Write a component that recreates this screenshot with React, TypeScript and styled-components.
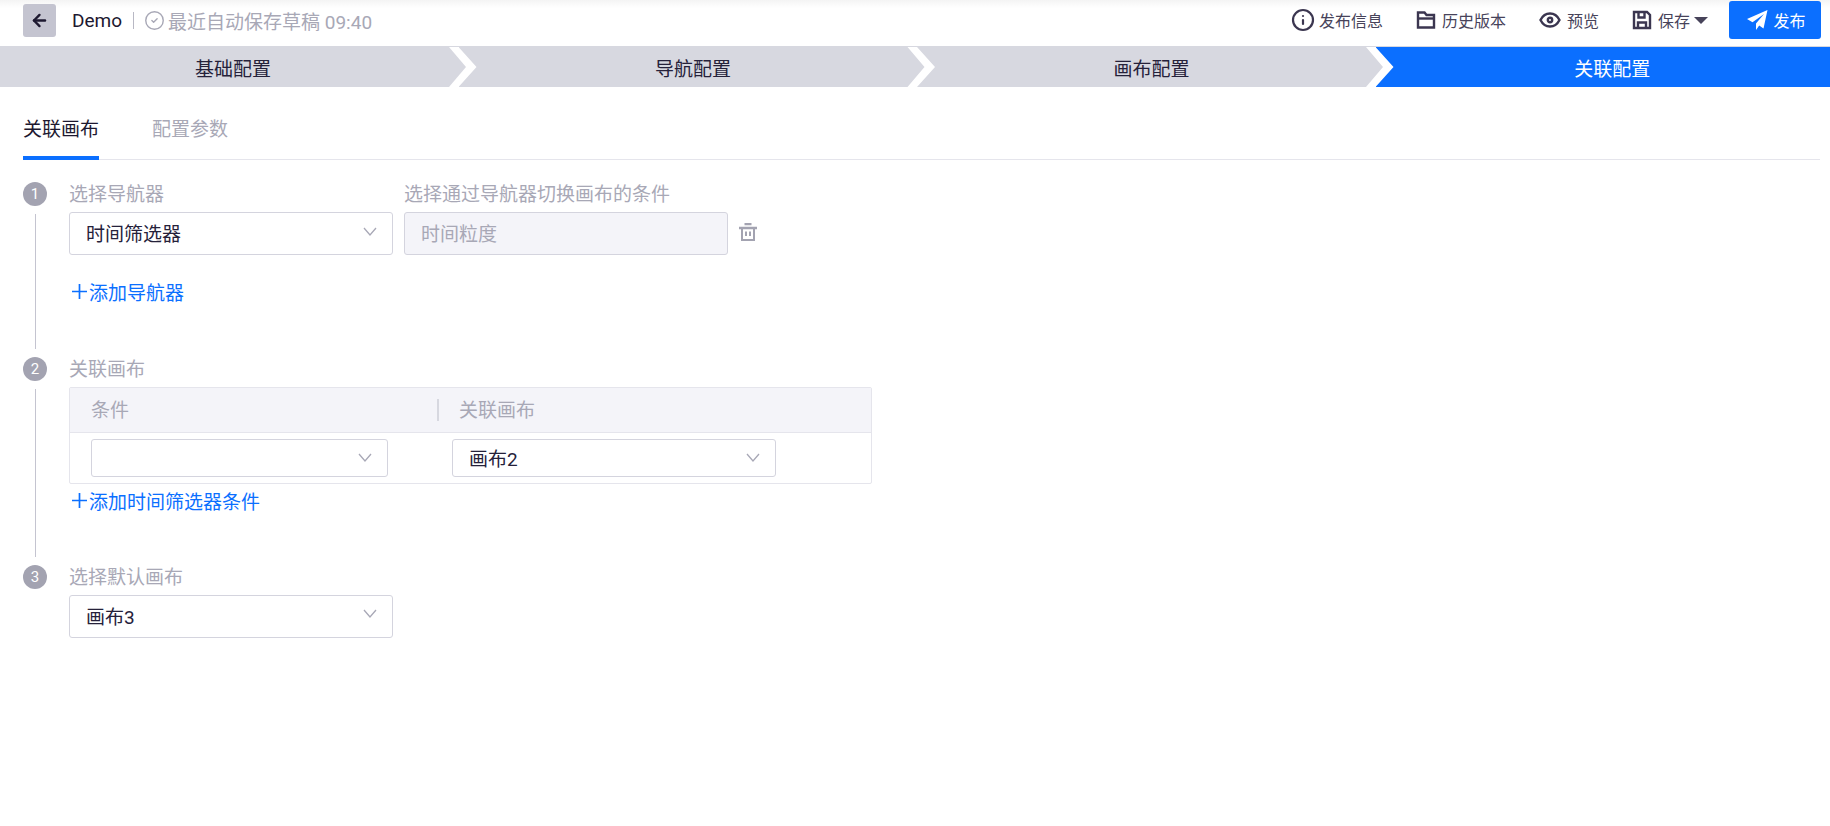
import React from 'react'
import styled, { createGlobalStyle } from 'styled-components'
import { ArrowLeft, CircleCheck, Info } from 'lucide-react'

const GlobalStyle = createGlobalStyle`
	html, body {
		margin: 0;
		padding: 0;
		background: #fff;
	}
	body {
		font-family: Roboto, 'Noto Sans CJK SC', sans-serif;
		color: #25213a;
	}
`

const Page = styled.div`
	width: 1830px;
	height: 826px;
	overflow: hidden;
	background: #fff;
`

const Header = styled.header`
	height: 46px;
	box-sizing: border-box;
	padding: 0 9px 6px 23px;
	display: flex;
	align-items: center;
	justify-content: space-between;
	background: linear-gradient(#f4f4f4, #fff 8px);
`

const HeaderLeft = styled.div`
	display: flex;
	align-items: center;
`

const BackButton = styled.button`
	width: 33px;
	height: 33px;
	padding: 0;
	border: 0;
	border-radius: 3px;
	background: #c4c4d0;
	color: #1d1830;
	display: flex;
	align-items: center;
	justify-content: center;
`

const Title = styled.span`
	margin-left: 16px;
	font-size: 19px;
	color: #1d1830;
`

const Divider = styled.span`
	width: 1px;
	height: 17px;
	margin: 0 10px 0 11px;
	background: #b8b8c4;
`

const DraftStatus = styled.span`
	display: flex;
	align-items: center;
	gap: 3px;
	font-size: 19px;
	color: #a8a8b6;
`

const HeaderActions = styled.div`
	display: flex;
	align-items: center;
`

const ActionItem = styled.span<{ $gap: number }>`
	display: flex;
	align-items: center;
	gap: 6px;
	margin-right: ${(p) => p.$gap}px;
	font-size: 16px;
	color: #47435a;
	white-space: nowrap;
`

const InfoIcon = styled(Info)`
	margin: 0 -2px;
	color: #3b3650;
`

const Caret = styled.span`
	width: 0;
	height: 0;
	border-left: 7px solid transparent;
	border-right: 7px solid transparent;
	border-top: 7px solid #47435a;
	margin-left: -2px;
`

const PublishButton = styled.button`
	width: 92px;
	height: 38px;
	padding: 0 0 0 2px;
	border: 0;
	border-radius: 3px;
	background: #0b6fff;
	color: #fff;
	font: inherit;
	font-size: 16px;
	display: flex;
	align-items: center;
	justify-content: center;
	gap: 5px;
`

const StepBar = styled.nav`
	display: flex;
	height: 41px;
	box-sizing: border-box;
	border-top: 1px solid #d7d8e0;
`

const StepItem = styled.div<{ $active?: boolean; $first?: boolean }>`
	flex: ${(p) => (p.$active ? '1 1 0' : '0 0 466px')};
	margin-left: ${(p) => (p.$first ? '0' : '-7.5px')};
	padding-left: ${(p) => (p.$first ? '0' : p.$active ? '19px' : '3px')};
	box-sizing: border-box;
	display: flex;
	align-items: center;
	justify-content: center;
	font-size: 19px;
	color: ${(p) => (p.$active ? '#fff' : '#25213a')};
	background: ${(p) => (p.$active ? '#0b6fff' : '#d7d8e0')};
	clip-path: ${(p) =>
		p.$active
			? 'polygon(0 0, 100% 0, 100% 100%, 0 100%, 18px 50%)'
			: p.$first
				? 'polygon(0 0, 449px 0, 466px 50%, 449px 100%, 0 100%)'
				: 'polygon(0 0, 449px 0, 466px 50%, 449px 100%, 0 100%, 18px 50%)'};
`

const TabBar = styled.div`
	display: flex;
	gap: 53px;
	margin: 0 10px 0 23px;
	height: 73px;
	box-sizing: border-box;
	border-bottom: 1px solid #e5e5ec;
`

const Tab = styled.div<{ $active?: boolean }>`
	height: 73px;
	box-sizing: border-box;
	padding-top: 30px;
	line-height: 25px;
	font-size: 19px;
	color: ${(p) => (p.$active ? '#1d1830' : '#a8a8b6')};
	border-bottom: 4px solid ${(p) => (p.$active ? '#0b6fff' : 'transparent')};
`

const Steps = styled.div`
	padding: 22px 0 0 23px;
`

const StepRow = styled.section<{ $height?: number }>`
	display: flex;
	gap: 22px;
	height: ${(p) => (p.$height ? `${p.$height}px` : 'auto')};
`

const Rail = styled.div`
	width: 24px;
	display: flex;
	flex-direction: column;
	align-items: center;
`

const StepNumber = styled.span`
	width: 24px;
	height: 24px;
	flex: none;
	border-radius: 50%;
	background: #a3a3b1;
	color: #fff;
	font-size: 15px;
	line-height: 24px;
	text-align: center;
`

const RailLine = styled.span`
	width: 1px;
	flex: 1;
	margin: 8px 0;
	background: #c4c4d0;
`

const FieldRow = styled.div`
	display: flex;
	align-items: flex-end;
	gap: 11px;
`

const Field = styled.div`
	display: flex;
	flex-direction: column;
	gap: 5px;
`

const Label = styled.label`
	font-size: 19px;
	line-height: 25px;
	color: #a8a8b6;
`

const Select = styled.div<{ $width?: number; $height?: number }>`
	width: ${(p) => p.$width ?? 324}px;
	height: ${(p) => p.$height ?? 43}px;
	box-sizing: border-box;
	padding: 0 15px 2px 16px;
	border: 1px solid #d4d4de;
	border-radius: 3px;
	display: flex;
	align-items: center;
	justify-content: space-between;
	font-size: 19px;
	color: #25213a;
	background: #fff;
`

const DisabledInput = styled(Select)`
	background: #f4f4f9;
	color: #a8a8b6;
`

const ArrowSvg = styled.svg<{ $lift?: number }>`
	margin-top: ${(p) => -(p.$lift ?? 0)}px;
	color: #a8a8b6;
`

const TrashIcon = styled.svg`
	margin-bottom: 14px;
	color: #a3a3b1;
`

const AddLink = styled.a<{ $top: number }>`
	display: flex;
	align-items: center;
	gap: 2px;
	margin: ${(p) => p.$top}px 0 0 3px;
	height: 24px;
	font-size: 19px;
	color: #0b6fff;
`

const TableBox = styled.div`
	width: 803px;
	box-sizing: border-box;
	border: 1px solid #e5e5ec;
	border-radius: 2px;
`

const TableHead = styled.div`
	height: 44px;
	display: flex;
	align-items: center;
	background: #f4f4f9;
	border-bottom: 1px solid #e5e5ec;
	font-size: 19px;
	color: #a8a8b6;
`

const HeadCell = styled.div<{ $width: number; $pad: number }>`
	width: ${(p) => p.$width}px;
	box-sizing: border-box;
	padding: 0 0 3px ${(p) => p.$pad}px;
`

const HeadDivider = styled.span`
	width: 2px;
	height: 22px;
	background: #d7d8e0;
`

const TableRow = styled.div`
	height: 50px;
	box-sizing: border-box;
	padding: 6px 0 0 21px;
	display: flex;
	gap: 64px;
`

const steps = ['基础配置', '导航配置', '画布配置', '关联配置']

const Arrow = ({ lift }: { lift?: number }) => (
	<ArrowSvg $lift={lift} width="14" height="9" viewBox="0 0 14 9" fill="none" stroke="currentColor" strokeWidth="1.3">
		<path d="M1 1l6 7 6-7" />
	</ArrowSvg>
)

const PlusGlyph = () => (
	<svg width="15" height="15" viewBox="0 0 15 15" fill="none" stroke="currentColor" strokeWidth="1.7">
		<path d="M0 7.500h15M7.500 0v15" />
	</svg>
)

const FolderGlyph = () => (
	<svg width="20" height="20" viewBox="0 0 20 20" fill="none" stroke="#3b3650" strokeWidth="2.4">
		<path d="M2 2.500h6.500l2 2.500H18v12.500H2z" />
		<path d="M2 8.500h16" />
	</svg>
)

const EyeGlyph = () => (
	<svg width="22" height="20" viewBox="0 0 22 20" fill="none" stroke="#3b3650" strokeWidth="2.4">
		<path d="M1.500 10C4 5 7.500 3.500 11 3.500s7 1.500 9.500 6.500c-2.500 5-6 6.500-9.500 6.500S4 15 1.500 10z" />
		<circle cx="11" cy="10" r="2.200" />
	</svg>
)

const SaveGlyph = () => (
	<svg width="20" height="20" viewBox="0 0 20 20" fill="none" stroke="#3b3650" strokeWidth="2.4">
		<path d="M2 2h13l3 3v13H2z" />
		<path d="M6.500 2v5.500h6V2" />
		<path d="M6 18v-5.500h8V18" />
	</svg>
)

const SendGlyph = () => (
	<svg width="22" height="22" viewBox="0 0 22 22" fill="#fff">
		<path d="M21.500 1 1 10l5.500 3.200L18 5 10 14.500V21l3.200-4.500 4.300 3z" />
	</svg>
)

const App = () => (
	<Page>
		<GlobalStyle />
		<Header>
			<HeaderLeft>
				<BackButton>
					<ArrowLeft size={19} strokeWidth={3} />
				</BackButton>
				<Title>Demo</Title>
				<Divider />
				<DraftStatus>
					<CircleCheck size={21} strokeWidth={1.6} />
					最近自动保存草稿 09:40
				</DraftStatus>
			</HeaderLeft>
			<HeaderActions>
				<ActionItem $gap={33}>
					<InfoIcon size={24} strokeWidth={2.2} />
					发布信息
				</ActionItem>
				<ActionItem $gap={33}>
					<FolderGlyph />
					历史版本
				</ActionItem>
				<ActionItem $gap={33}>
					<EyeGlyph />
					预览
				</ActionItem>
				<ActionItem $gap={21}>
					<SaveGlyph />
					保存
					<Caret />
				</ActionItem>
				<PublishButton>
					<SendGlyph />
					发布
				</PublishButton>
			</HeaderActions>
		</Header>
		<StepBar>
			{steps.map((step, i) => (
				<StepItem key={step} $first={i === 0} $active={i === steps.length - 1}>
					{step}
				</StepItem>
			))}
		</StepBar>
		<TabBar>
			<Tab $active>关联画布</Tab>
			<Tab>配置参数</Tab>
		</TabBar>
		<Steps>
			<StepRow $height={175}>
				<Rail>
					<StepNumber>1</StepNumber>
					<RailLine />
				</Rail>
				<div>
					<FieldRow>
						<Field>
							<Label>选择导航器</Label>
							<Select>
								时间筛选器
								<Arrow lift={2} />
							</Select>
						</Field>
						<Field>
							<Label>选择通过导航器切换画布的条件</Label>
							<DisabledInput>时间粒度</DisabledInput>
						</Field>
						<TrashIcon width="18" height="18" viewBox="0 0 18 18" fill="none" stroke="currentColor" strokeWidth="2">
							<path d="M5.500 1h7M0 5h18" strokeWidth="2.400" />
							<path d="M3 5v12h12V5M7 8.500V13M11 8.500V13" />
						</TrashIcon>
					</FieldRow>
					<AddLink $top={24}>
						<PlusGlyph />
						添加导航器
					</AddLink>
				</div>
			</StepRow>
			<StepRow $height={208}>
				<Rail>
					<StepNumber>2</StepNumber>
					<RailLine />
				</Rail>
				<div>
					<Field>
						<Label>关联画布</Label>
						<TableBox>
							<TableHead>
								<HeadCell $width={367} $pad={21}>条件</HeadCell>
								<HeadDivider />
								<HeadCell $width={300} $pad={20}>关联画布</HeadCell>
							</TableHead>
							<TableRow>
								<Select $width={297} $height={38}>
									<span />
									<Arrow />
								</Select>
								<Select $height={38}>
									画布2
									<Arrow />
								</Select>
							</TableRow>
						</TableBox>
					</Field>
					<AddLink $top={4}>
						<PlusGlyph />
						添加时间筛选器条件
					</AddLink>
				</div>
			</StepRow>
			<StepRow>
				<Rail>
					<StepNumber>3</StepNumber>
				</Rail>
				<Field>
					<Label>选择默认画布</Label>
					<Select>
						画布3
						<Arrow lift={5} />
					</Select>
				</Field>
			</StepRow>
		</Steps>
	</Page>
)

export default App
